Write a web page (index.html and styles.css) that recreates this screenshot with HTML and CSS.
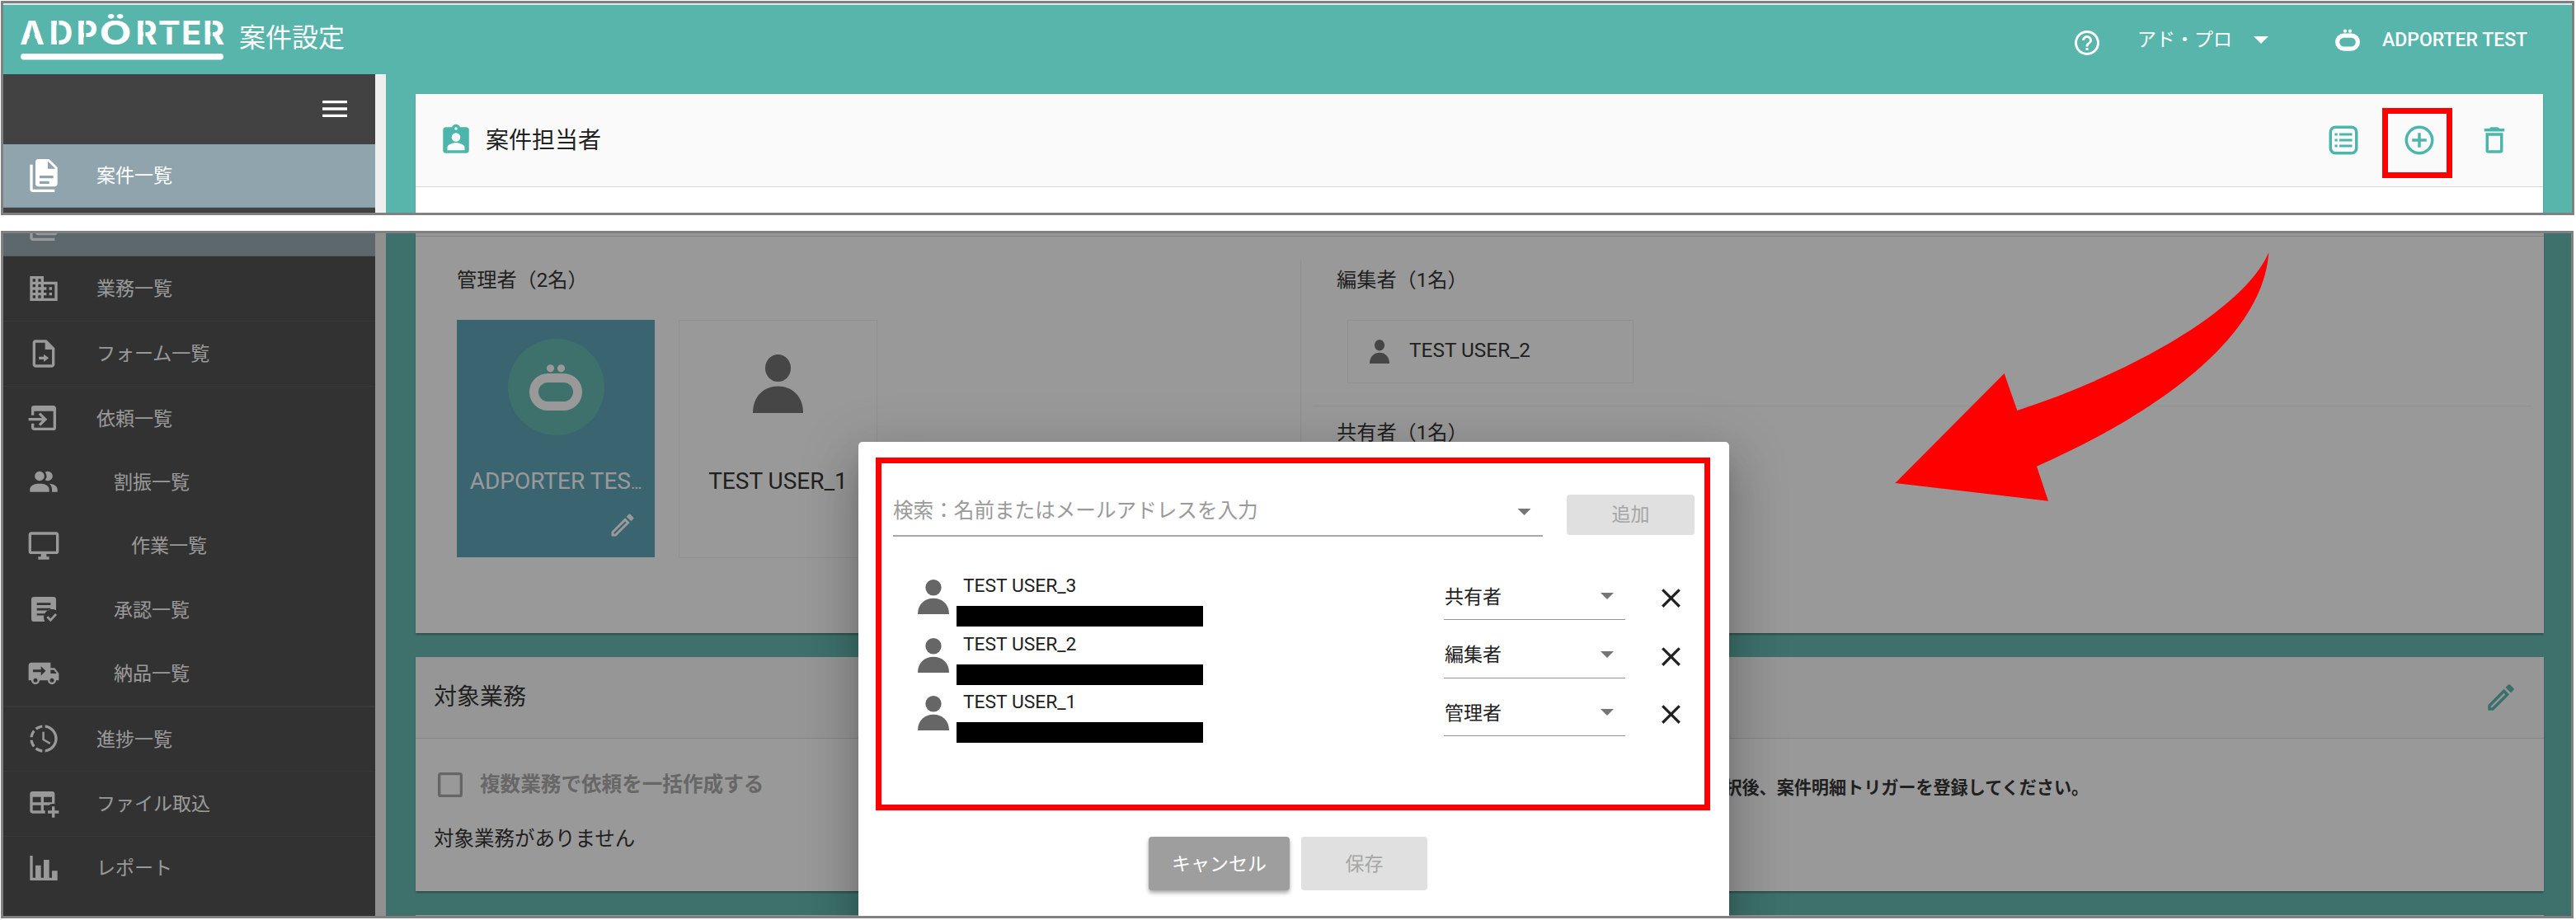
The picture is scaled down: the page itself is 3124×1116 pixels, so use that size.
FILE: index.html
```html
<!DOCTYPE html>
<html lang="ja">
<head>
    <meta charset="UTF-8">
    <meta name="viewport" content="width=device-width, initial-scale=1.0">
    <title>案件設定</title>
    <link rel="stylesheet" href="styles.css">
</head>
<body>
<!-- icons -->
<svg class="sprite" aria-hidden="true">
    <symbol id="i-menu" viewBox="0 0 24 24"><path d="M3,6H21V8H3V6M3,11H21V13H3V11M3,16H21V18H3V16Z"/></symbol>
    <symbol id="i-docs" viewBox="0 0 24 24"><path d="M16,0H8C6.9,0 6,.9 6,2V18C6,19.1 6.9,20 8,20H20C21.1,20 22,19.1 22,18V6L16,0M16,18H9V16H16V18M19,14H9V12H19V14M15,7V1.5L20.5,7H15M4,4V22H20V24H4C2.9,24 2,23.1 2,22V4H4Z" fill-rule="evenodd"/></symbol>
    <symbol id="i-domain" viewBox="0 0 24 24"><path d="M12 7V3H2v18h20V7H12zM6 19H4v-2h2v2zm0-4H4v-2h2v2zm0-4H4V9h2v2zm0-4H4V5h2v2zm4 12H8v-2h2v2zm0-4H8v-2h2v2zm0-4H8V9h2v2zm0-4H8V5h2v2zm10 12h-8v-2h2v-2h-2v-2h2v-2h-2V9h8v10zm-2-8h-2v2h2v-2zm0 4h-2v2h2v-2z"/></symbol>
    <symbol id="i-form" viewBox="0 0 24 24"><path d="M14,2H6C4.9,2 4,2.9 4,4V20C4,21.1 4.9,22 6,22H18C19.1,22 20,21.1 20,20V8L14,2M18,20H6V4H13V9H18V20M8.5,14.2V16.2H12V18L15.7,15.2L12,12.4V14.2Z"/></symbol>
    <symbol id="i-import" viewBox="0 0 24 24"><path d="M1,12H10.76L8.26,9.5L9.67,8.08L14.59,13L9.67,17.92L8.26,16.5L10.76,14H1V12M19,3C20.11,3 21,3.9 21,5V19A2,2 0 0,1 19,21H5C3.89,21 3,20.1 3,19V16H5V19H19V7H5V10H3V5A2,2 0 0,1 5,3H19Z"/></symbol>
    <symbol id="i-people" viewBox="0 0 24 24"><path d="M16 17V19H2V17S2 13 9 13 16 17 16 17M12.5 7.5A3.5 3.5 0 1 0 9 11A3.5 3.5 0 0 0 12.5 7.5M15.94 13A5.32 5.32 0 0 1 18 17V19H22V17S22 13.37 15.94 13M15 4A3.39 3.39 0 0 0 13.07 4.59A5 5 0 0 1 13.07 10.41A3.39 3.39 0 0 0 15 11A3.5 3.5 0 0 0 15 4Z"/></symbol>
    <symbol id="i-monitor" viewBox="0 0 24 24"><path d="M21,16H3V4H21M21,2H3C1.89,2 1,2.89 1,4V16A2,2 0 0,0 3,18H10V20H8V22H16V20H14V18H21A2,2 0 0,0 23,16V4C23,2.89 22.1,2 21,2Z"/></symbol>
    <symbol id="i-approve" viewBox="0 0 24 24"><path fill-rule="evenodd" d="M17 21.2L14 18.1L15.2 16.9L17 18.7L20.4 15L21.6 16.2ZM12.8 21H5A2 2 0 0 1 3 19V5A2 2 0 0 1 5 3H19A2 2 0 0 1 21 5V12.8A6 6 0 0 0 12.8 21ZM17 9V7.3H7V9ZM15.5 12.9L17 12V11.3H7V12.9ZM12.2 16.5L12.6 15.2H7V16.5Z"/></symbol>
    <symbol id="i-truck" viewBox="0 0 24 24"><path fill-rule="evenodd" d="M18 18.5A1.5 1.5 0 0 0 19.5 17 1.5 1.5 0 0 0 18 15.5 1.5 1.5 0 0 0 16.5 17 1.5 1.5 0 0 0 18 18.5M19.5 9.5H17V12H21.46L19.5 9.5M6 18.5A1.5 1.5 0 0 0 7.5 17 1.5 1.5 0 0 0 6 15.5 1.5 1.5 0 0 0 4.5 17 1.5 1.5 0 0 0 6 18.5M20 8L23 12V17H21A3 3 0 0 1 15 17H9A3 3 0 0 1 3 17H1V6C1 4.89 1.89 4 3 4H17V8H20ZM4.2 9.2H10V6.7L13.5 10.1L10 13.5V11H4.2Z"/></symbol>
    <symbol id="i-progress" viewBox="0 0 24 24"><path d="M13,2.03V2.05L13,4.05C17.39,4.59 20.5,8.58 19.96,12.97C19.5,16.61 16.64,19.5 13,19.93V21.93C18.5,21.38 22.5,16.5 21.95,11C21.5,6.25 17.73,2.5 13,2.03M11,2.06C9.05,2.25 7.19,3 5.67,4.26L7.1,5.74C8.22,4.84 9.57,4.26 11,4.06V2.06M4.26,5.67C3,7.19 2.25,9.04 2.05,11H4.05C4.24,9.58 4.8,8.23 5.69,7.1L4.26,5.67M2.06,13C2.26,14.96 3.03,16.81 4.27,18.33L5.69,16.9C4.81,15.77 4.24,14.42 4.06,13H2.06M7.1,18.37L5.67,19.74C7.18,21 9.04,21.79 11,22V20C9.58,19.82 8.23,19.25 7.1,18.37M12.5,7V12.25L17,14.92L16.25,16.15L11,13V7H12.5Z"/></symbol>
    <symbol id="i-table" viewBox="0 0 24 24"><path d="M18 14H20V17H23V19H20V22H18V19H15V17H18V14M4 3H18A2 2 0 0 1 20 5V12.17C18.5 11.88 16.94 12.19 15.69 13H12V17H13.09C12.97 17.68 12.97 18.35 13.09 19H4A2 2 0 0 1 2 17V5A2 2 0 0 1 4 3M4 7V11H10V7H4M12 7V11H18V7H12M4 13V17H10V13H4Z"/></symbol>
    <symbol id="i-chart" viewBox="0 0 24 24"><path d="M22,21H2V3H4V19H6V10H10V19H12V6H16V19H18V14H22V21Z"/></symbol>
    <symbol id="i-help" viewBox="0 0 24 24"><path d="M11,18H13V16H11V18M12,2A10,10 0 0,0 2,12A10,10 0 0,0 12,22A10,10 0 0,0 22,12A10,10 0 0,0 12,2M12,20C7.59,20 4,16.41 4,12C4,7.59 7.59,4 12,4C16.41,4 20,7.59 20,12C20,16.41 16.41,20 12,20M12,6A4,4 0 0,0 8,10H10A2,2 0 0,1 12,8A2,2 0 0,1 14,10C14,12 11,11.75 11,15H13C13,12.75 16,12.5 16,10A4,4 0 0,0 12,6Z"/></symbol>
    <symbol id="i-down" viewBox="0 0 10 5"><path d="M0,0L5,5L10,0Z"/></symbol>
    <symbol id="i-badge" viewBox="0 0 24 24"><path fill-rule="evenodd" d="M12 1c1.31 0 2.42.83 2.83 2H19a2 2 0 0 1 2 2v14a2 2 0 0 1-2 2H5a2 2 0 0 1-2-2V5a2 2 0 0 1 2-2h4.17C9.58 1.83 10.69 1 12 1m0 2a1 1 0 0 0-1 1 1 1 0 0 0 1 1 1 1 0 0 0 1-1 1 1 0 0 0-1-1m0 4a3 3 0 0 0-3 3 3 3 0 0 0 3 3 3 3 0 0 0 3-3 3 3 0 0 0-3-3M6 17v2h12v-2c0-2-4-3.1-6-3.1S6 15 6 17z"/></symbol>
    <symbol id="i-list" viewBox="0 0 24 24"><rect x="3" y="3" width="18" height="18" rx="3.4" fill="none" stroke="currentColor" stroke-width="2"/><path d="M6 7.2h1.8v1.6H6zM9.2 7.2H18v1.6H9.2zM6 11.2h1.8v1.6H6zM9.2 11.2H18v1.6H9.2zM6 15.2h1.8v1.6H6zM9.2 15.2H18v1.6H9.2z"/></symbol>
    <symbol id="i-plus" viewBox="0 0 24 24"><path d="M12,20C7.59,20 4,16.41 4,12C4,7.59 7.59,4 12,4C16.41,4 20,7.59 20,12C20,16.41 16.41,20 12,20M12,2A10,10 0 0,0 2,12A10,10 0 0,0 12,22A10,10 0 0,0 22,12A10,10 0 0,0 12,2M13,7H11V11H7V13H11V17H13V13H17V11H13V7Z"/></symbol>
    <symbol id="i-trash" viewBox="0 0 24 24"><path d="M6,19A2,2 0 0,0 8,21H16A2,2 0 0,0 18,19V7H6V19M8,9H16V19H8V9M15.5,4L14.5,3H9.5L8.5,4H5V6H19V4H15.5Z"/></symbol>
    <symbol id="i-pencil" viewBox="0 0 24 24"><path d="M14.06,9L15,9.94L5.92,19H5V18.08L14.06,9M17.66,3C17.41,3 17.15,3.1 16.96,3.29L15.13,5.12L18.88,8.87L20.71,7.04C21.1,6.65 21.1,6 20.71,5.63L18.37,3.29C18.17,3.09 17.92,3 17.66,3M14.06,6.19L3,17.25V21H6.75L17.81,9.94L14.06,6.19Z"/></symbol>
    <symbol id="i-checkbox" viewBox="0 0 24 24"><path d="M19,3H5C3.89,3 3,3.89 3,5V19A2,2 0 0,0 5,21H19A2,2 0 0,0 21,19V5C21,3.89 20.1,3 19,3M19,5V19H5V5H19Z"/></symbol>
    <symbol id="i-close" viewBox="0 0 24 24"><path d="M19,6.41L17.59,5L12,10.59L6.41,5L5,6.41L10.59,12L5,17.59L6.41,19L12,13.41L17.59,19L19,17.59L13.41,12L19,6.41Z"/></symbol>
    <symbol id="i-user" viewBox="0 0 61 71" preserveAspectRatio="none"><ellipse cx="30.5" cy="16.5" rx="15.5" ry="16.5"/><path d="M0 71C0 50 14 38.5 30.5 38.5S61 50 61 71Z"/></symbol>
    <symbol id="i-mark" viewBox="0 0 64 56"><rect x="5.5" y="16.5" width="53" height="34" rx="17" fill="none" stroke="currentColor" stroke-width="11"/><circle cx="25.5" cy="4.8" r="4.6"/><circle cx="38.5" cy="4.8" r="4.6"/></symbol>
</svg>

<!-- upper part of the page -->
<div class="frame frame-top">
    <header class="app-bar">
        <svg class="logo" viewBox="0 0 248 60">
            <text class="logo-text" y="38.5" x="0 35.5 68.5">ADP</text>
            <text class="logo-text" y="38.5" x="96.5" textLength="39" lengthAdjust="spacingAndGlyphs">Ö</text>
            <text class="logo-text" y="38.5" x="140.5 168 196 222">RTER</text>
            <path class="logo-cut" d="M46.2 8V40M79.2 8V40M151.2 8V40M232.6 8V40M168 16.5H193"/>
            <path class="logo-hole" d="M15 19L21.5 39H8.5Z"/>
            <rect x="1" y="50" width="246" height="7.5" rx="3.7"/>
        </svg>
        <h1 class="app-title">案件設定</h1>
        <svg class="icon icon-help"><use href="#i-help"/></svg>
        <span class="account-name">アド・プロ</span>
        <svg class="account-arrow"><use href="#i-down"/></svg>
        <svg class="account-mark"><use href="#i-mark"/></svg>
        <span class="user-name">ADPORTER TEST</span>
    </header>
    <div class="page">
        <nav class="sidebar">
            <div class="sidebar-top"><svg class="icon"><use href="#i-menu"/></svg></div>
            <a class="nav-item active"><svg class="icon"><use href="#i-docs"/></svg>案件一覧</a>
        </nav>
        <div class="scrollbar"></div>
        <main class="content">
            <section class="card">
                <div class="card-head members-head">
                    <svg class="icon icon-lg"><use href="#i-badge"/></svg>
                    <h2>案件担当者</h2>
                    <div class="tools">
                        <svg class="icon icon-lg"><use href="#i-list"/></svg>
                        <span class="tool-add">
                            <svg class="icon icon-lg"><use href="#i-plus"/></svg>
                            <span class="highlight"></span>
                        </span>
                        <svg class="icon icon-lg"><use href="#i-trash"/></svg>
                    </div>
                </div>
            </section>
        </main>
    </div>
</div>

<!-- lower part, with the member dialog open -->
<div class="frame frame-bottom">
    <div class="page">
        <nav class="sidebar scrolled">
            <a class="nav-item active"><svg class="icon"><use href="#i-docs"/></svg></a>
            <a class="nav-item"><svg class="icon"><use href="#i-domain"/></svg>業務一覧</a>
            <a class="nav-item"><svg class="icon"><use href="#i-form"/></svg>フォーム一覧</a>
            <div class="nav-group">
                <a class="nav-item"><svg class="icon"><use href="#i-import"/></svg>依頼一覧</a>
                <a class="nav-item level-2"><svg class="icon"><use href="#i-people"/></svg>割振一覧</a>
                <a class="nav-item level-3"><svg class="icon"><use href="#i-monitor"/></svg>作業一覧</a>
                <a class="nav-item level-2"><svg class="icon"><use href="#i-approve"/></svg>承認一覧</a>
                <a class="nav-item level-2"><svg class="icon"><use href="#i-truck"/></svg>納品一覧</a>
            </div>
            <a class="nav-item"><svg class="icon"><use href="#i-progress"/></svg>進捗一覧</a>
            <a class="nav-item"><svg class="icon"><use href="#i-table"/></svg>ファイル取込</a>
            <a class="nav-item last"><svg class="icon"><use href="#i-chart"/></svg>レポート</a>
        </nav>
        <div class="scrollbar"></div>
        <main class="content">
            <section class="card members-card">
                <div class="members">
                    <div class="admins">
                        <h3>管理者（2名）</h3>
                        <div class="tiles">
                            <div class="tile me">
                                <div class="avatar"><svg class="avatar-mark"><use href="#i-mark"/></svg></div>
                                <p class="tile-name">ADPORTER TES<span class="dots">…</span></p>
                                <svg class="icon tile-edit"><use href="#i-pencil"/></svg>
                            </div>
                            <div class="tile">
                                <svg class="tile-user"><use href="#i-user"/></svg>
                                <p class="tile-name">TEST USER_1</p>
                            </div>
                        </div>
                    </div>
                    <div class="others">
                        <div class="editors">
                            <h3>編集者（1名）</h3>
                            <div class="chip"><svg><use href="#i-user"/></svg>TEST USER_2</div>
                        </div>
                        <h3 class="shared-title">共有者（1名）</h3>
                    </div>
                </div>
            </section>
            <section class="card tasks-card">
                <div class="card-head tasks-head">
                    <h2>対象業務</h2>
                    <svg class="icon icon-lg"><use href="#i-pencil"/></svg>
                </div>
                <div class="tasks">
                    <div class="tasks-left">
                        <label class="check"><svg class="icon"><use href="#i-checkbox"/></svg>複数業務で依頼を一括作成する</label>
                        <p class="empty">対象業務がありません</p>
                    </div>
                    <p class="note">業務を選択後、案件明細トリガーを登録してください。</p>
                </div>
            </section>
            <section class="card"></section>
        </main>
    </div>

    <div class="overlay"></div>

    <svg class="arrow" viewBox="0 0 1560 1020">
        <path d="M55 888L452 489L499 624C950 475 1330 245 1414 49C1395 340 1050 615 570 827L612 953Z"/>
    </svg>

    <div class="dialog">
        <div class="search-row">
            <div class="search-field">
                <span>検索：名前またはメールアドレスを入力</span>
                <svg><use href="#i-down"/></svg>
            </div>
            <button class="btn btn-add" disabled>追加</button>
        </div>
        <div class="user-list">
            <div class="user-row">
                <svg class="user-icon"><use href="#i-user"/></svg>
                <div class="user-info"><p>TEST USER_3</p><div class="mask"></div></div>
                <div class="role">共有者<svg><use href="#i-down"/></svg></div>
                <svg class="icon remove"><use href="#i-close"/></svg>
            </div>
            <div class="user-row">
                <svg class="user-icon"><use href="#i-user"/></svg>
                <div class="user-info"><p>TEST USER_2</p><div class="mask"></div></div>
                <div class="role">編集者<svg><use href="#i-down"/></svg></div>
                <svg class="icon remove"><use href="#i-close"/></svg>
            </div>
            <div class="user-row">
                <svg class="user-icon"><use href="#i-user"/></svg>
                <div class="user-info"><p>TEST USER_1</p><div class="mask"></div></div>
                <div class="role">管理者<svg><use href="#i-down"/></svg></div>
                <svg class="icon remove"><use href="#i-close"/></svg>
            </div>
        </div>
        <div class="dialog-actions">
            <button class="btn btn-cancel">キャンセル</button>
            <button class="btn btn-save" disabled>保存</button>
        </div>
        <span class="highlight"></span>
    </div>
</div>
</body>
</html>
```
FILE: styles.css
```css
* {
    box-sizing: border-box;
    margin: 0;
    padding: 0;
}

body {
    width: 3124px;
    height: 1116px;
    padding: 1px 0 0 1px;
    overflow: hidden;
    background-color: #fff;
    color: #212121;
    font-family: Roboto, "Noto Sans CJK JP", sans-serif;
    font-weight: 400;
}

h1, h2, h3 {
    font-weight: 400;
}

svg {
    display: block;
    flex: none;
    fill: currentColor;
}

.sprite {
    display: none;
}

.icon {
    width: 40px;
    height: 40px;
}

.icon-lg {
    width: 42px;
    height: 42px;
}

.highlight {
    position: absolute;
    border: 7px solid #f00;
}

/* frames */

.frame {
    border: 3px solid #808080;
    overflow: hidden;
    display: flex;
    flex-direction: column;
}

.frame-top {
    width: 3121px;
    height: 260px;
}

.frame-bottom {
    position: relative;
    width: 3120px;
    height: 834px;
    margin-top: 19px;
}

.page {
    display: flex;
    flex: 1;
    min-height: 0;
    background-color: #57b5ac;
}

/* app bar */

.app-bar {
    height: 86px;
    flex: none;
    display: flex;
    align-items: center;
    border-top: 2px solid #dcebea;
    background-color: #57b5ac;
    color: #fff;
    padding-left: 20px;
}

.logo {
    width: 248px;
    height: 60px;
    margin-top: -6px;
}

.logo-text {
    font-family: Inter, sans-serif;
    font-weight: 700;
    font-size: 40px;
}

.logo-cut {
    fill: none;
    stroke: #57b5ac;
    stroke-width: 2.5;
}

.logo-hole {
    fill: #57b5ac;
}

.app-title {
    font-size: 32px;
    line-height: 40px;
    margin: -5px auto 0 18px;
}

.icon-help {
    width: 36px;
    height: 36px;
    margin-top: 7px;
}

.account-name {
    font-size: 23px;
    margin: -5px 26px 0 43px;
}

.account-arrow {
    width: 18px;
    height: 9px;
    margin-right: 81px;
}

.account-mark {
    width: 30px;
    height: 27px;
}

.user-name {
    font-size: 23px;
    font-weight: 500;
    width: 175px;
    margin: 0 55px 0 27px;
    white-space: nowrap;
}

/* sidebar */

.sidebar {
    width: 451px;
    flex: none;
    background-color: #424242;
    color: #fff;
}

.scrolled {
    margin-top: -49px;
}

.sidebar-top {
    height: 85px;
    display: flex;
    align-items: center;
    justify-content: flex-end;
    padding: 0 29px 2px 0;
}

.nav-item {
    height: 79px;
    display: flex;
    align-items: center;
    padding: 0 0 4px 29px;
    border-bottom: 1px solid #4e4e4e;
    font-size: 23px;
}

.nav-item .icon {
    margin: 3px 44px 0 0;
}

.nav-item.active {
    height: 77px;
    background-color: #90a4ae;
    border-bottom-color: #78909c;
}

.nav-group {
    border-bottom: 2px solid #4e4e4e;
}

.nav-group .nav-item {
    height: 77.4px;
    border-bottom: none;
}

.nav-group ~ .nav-item {
    height: 78.5px;
}

.nav-item.level-2 .icon {
    margin-right: 65px;
}

.nav-item.level-3 .icon {
    margin-right: 86px;
}

.nav-item.last {
    height: 77px;
    border-bottom: none;
}

.scrollbar {
    width: 13px;
    flex: none;
    background-color: #efefef;
}

/* content */

.content {
    flex: 1;
    display: flex;
    flex-direction: column;
    padding: 24px 35px 0 36px;
}

.frame-bottom .content {
    padding: 0 33px 0 36px;
    gap: 29px;
}

.card {
    flex: 1;
    background-color: #fff;
    box-shadow: 0 3px 2px -1px rgba(0,0,0,0.3), 0 1px 2px rgba(0,0,0,0.15);
}

.card-head {
    display: flex;
    align-items: center;
    justify-content: space-between;
    background-color: #fafafa;
    border-bottom: 1px solid #d8d8d8;
}

.card-head h2 {
    font-size: 28px;
    line-height: 36px;
}

.members-head {
    height: 113px;
    padding: 0 38px 0 28px;
}

.members-head .icon, .tasks-head .icon {
    color: #4db6ac;
}

.members-head h2 {
    margin: 2px auto 0 15px;
}

.tools {
    display: flex;
    gap: 49.5px;
}

.tool-add {
    position: relative;
}

.tool-add .highlight {
    top: -18px;
    left: -24px;
    width: 85px;
    height: 85px;
}

/* member card */

.members-card {
    flex: none;
    height: 485px;
    border-top: 3px solid #fafafa;
}

.members {
    height: 482px;
    border-top: 1px solid #d8d8d8;
    display: flex;
    padding-top: 29px;
}

.members h3 {
    font-size: 24.2px;
    line-height: 34px;
}

.admins {
    width: 1074px;
    padding: 7px 0 0 50px;
    border-right: 1px solid #eee;
}

.tiles {
    display: flex;
    gap: 29px;
    margin-top: 31px;
}

.tile {
    width: 241px;
    height: 289px;
    padding: 0 14px;
    border: 1px solid #eee;
    display: flex;
    flex-direction: column;
    align-items: center;
}

.tile.me {
    width: 240px;
    height: 288px;
    border: none;
    background-color: #519db4;
    color: #fff;
}

.avatar {
    width: 117px;
    height: 117px;
    margin-top: 23px;
    border-radius: 50%;
    background-color: #57b5ac;
    display: flex;
    align-items: center;
    justify-content: center;
}

.avatar-mark {
    width: 64px;
    height: 56px;
}

.tile-name {
    width: 100%;
    font-size: 28px;
    line-height: 36px;
    margin-top: 38px;
    text-align: center;
    white-space: nowrap;
}

.dots {
    font-size: 20px;
    line-height: 1;
}

.tile-user {
    width: 61px;
    height: 71px;
    margin-top: 41px;
    color: #666;
}

.tile-user + .tile-name {
    margin-top: 65px;
}

.tile-edit {
    width: 36px;
    height: 36px;
    margin-top: 17px;
    align-self: flex-end;
    margin-right: 7px;
}

.others {
    flex: 1;
    padding: 7px 15px 0 15px;
}

.editors {
    height: 170px;
    padding-left: 28px;
    border-bottom: 1px solid #eee;
}

.chip {
    width: 347px;
    height: 77px;
    margin: 31px 0 0 13px;
    padding: 0 0 4px 26px;
    border: 1px solid #eee;
    display: flex;
    align-items: center;
    gap: 24px;
    font-size: 24.4px;
}

.chip svg {
    width: 24px;
    height: 29px;
    margin-top: 3px;
    color: #666;
}

.members .shared-title {
    margin: 15px 0 0 28px;
}

/* task card */

.tasks-card {
    flex: none;
    height: 284px;
}

.tasks-head {
    height: 99px;
    padding: 0 31px 0 22px;
}

.tasks-head h2 {
    margin-top: -1px;
}

.tasks {
    display: flex;
    padding-left: 22px;
}

.tasks-left {
    width: 1481px;
}

.check {
    display: flex;
    align-items: center;
    gap: 16px;
    margin-top: 36px;
    font-size: 24.6px;
    font-weight: 700;
    line-height: 40px;
    color: #a3a3a3;
}

.check .icon {
    color: #a0a0a0;
}

.empty {
    font-size: 24.5px;
    line-height: 36px;
    margin-top: 28px;
}

.note {
    font-size: 21.1px;
    font-weight: 700;
    line-height: 30px;
    margin-top: 45px;
}

/* overlay and arrow */

.overlay {
    position: absolute;
    inset: 0;
    background-color: rgba(33,33,33,0.46);
}

.arrow {
    position: absolute;
    left: 2276px;
    top: 7px;
    width: 520px;
    height: 340px;
    color: #f00;
}

/* dialog */

.dialog {
    position: absolute;
    left: 1037px;
    top: 253px;
    width: 1056px;
    height: 640px;
    padding: 64px 42px 0;
    border-radius: 5px;
    background-color: #fff;
    box-shadow: 0 16px 22px -10px rgba(0,0,0,0.2), 0 36px 57px 5px rgba(0,0,0,0.14), 0 14px 69px 12px rgba(0,0,0,0.12);
}

.dialog > .highlight {
    left: 21px;
    top: 19px;
    width: 1012px;
    height: 428px;
}

.search-row {
    display: flex;
    align-items: flex-start;
    justify-content: space-between;
}

.search-field {
    width: 788px;
    height: 51px;
    padding-right: 14px;
    padding-bottom: 15px;
    border-bottom: 2px solid #a8a8a8;
    display: flex;
    align-items: center;
    justify-content: space-between;
    font-size: 24.6px;
    color: #9a9a9a;
}

.search-field svg {
    width: 17px;
    height: 8px;
    margin-top: 8px;
    color: #757575;
}

.btn {
    border: none;
    border-radius: 4px;
    padding-bottom: 3px;
    font-family: inherit;
    font-weight: 400;
    font-size: 23px;
}

.btn:disabled {
    background-color: #e0e0e0;
    color: #a6a6a6;
}

.btn-add {
    width: 155px;
    height: 49px;
    padding-bottom: 6px;
}

.user-list {
    padding: 49px 0 0 30px;
}

.user-row {
    display: flex;
    align-items: flex-start;
    height: 70.6px;
}

.user-icon {
    width: 38px;
    height: 42px;
    margin-top: 3px;
    color: #666;
}

.user-info {
    width: 591px;
    margin-left: 9px;
}

.user-info p {
    font-size: 22.8px;
    line-height: 22px;
    padding-left: 8px;
}

.mask {
    width: 299px;
    height: 25px;
    margin-top: 13px;
    background-color: #000;
}

.role {
    width: 220px;
    height: 52px;
    padding: 0 14px 8px 1px;
    border-bottom: 1px solid #949494;
    display: flex;
    align-items: center;
    justify-content: space-between;
    font-size: 23px;
}

.role svg {
    width: 16px;
    height: 8px;
    margin-top: 3px;
    color: #757575;
}

.remove {
    width: 39px;
    height: 39px;
    margin: 6px 0 0 36px;
}

.dialog-actions {
    display: flex;
    gap: 14px;
    padding: 103px 0 0 310px;
}

.btn-cancel {
    width: 171px;
    height: 65px;
    background-color: #9e9e9e;
    color: #fff;
    box-shadow: 0 3px 5px rgba(0,0,0,0.35);
}

.btn-save {
    width: 153px;
    height: 65px;
}
```
